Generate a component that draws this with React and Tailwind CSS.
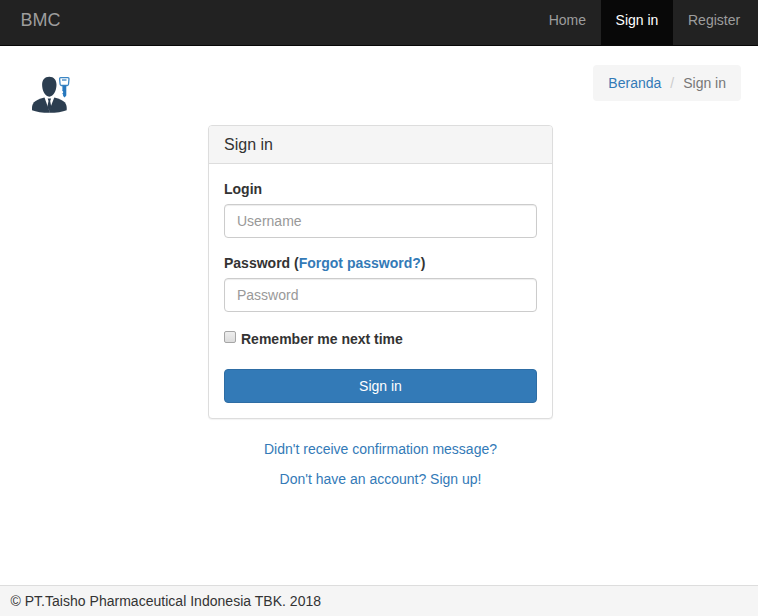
import React from "react";

function UserKeyIcon() {
  return (
    <svg className="block h-[38px] w-[40px]" viewBox="0 0 40 38" aria-hidden="true">
      <g fill="#2c3e50">
        <path d="M18.300 0.800c4.600 0 7.200 3 7.200 8 0 5.400-2.900 11.900-7.200 11.900S11.100 14.200 11.100 8.800c0-5 2.600-8 7.200-8z" />
        <path d="M13.500 21.600 L18.200 34.500 V36.800 C11.500 36.800 5 35.900 1 34.200 C0.600 27.500 2.600 24.300 13.500 21.600z" />
        <path d="M23.300 21.600 L18.200 34.500 V36.800 C25.200 36.800 31.700 35.900 35.700 34.200 C36.100 27.500 34.100 24.300 23.300 21.600z" />
        <path d="M16.700 22.600h3.400l-.9 2.300 1.100 6-2 4-2-4 1.200-6z" />
      </g>
      <path d="M29.600 1.700h7.400q1 0 1 1l-.5 5.600q-.1 1.200-1.300 1.200h-5.800q-1.200 0-1.300-1.200l-.5-5.600q0-1 1-1z" fill="#fff" stroke="#3b86c4" strokeWidth="1.300" />
      <path d="M31 4h4.500" stroke="#2878bd" strokeWidth="1.200" />
      <path d="M31.400 9.500h3.900v10l-1.700 1.900-1.500-1.500v-1.300l-.9-.9.900-.9v-1.200l-.9-.9.200-.8z" fill="#2878bd" />
    </svg>
  );
}

function Field({ id, label, type, placeholder }) {
  return (
    <div className="mb-[15px]">
      <label htmlFor={id} className="mb-[5px] block font-bold">{label}</label>
      <input
        id={id}
        type={type}
        placeholder={placeholder}
        className="block h-[34px] w-full rounded-[4px] border border-[#ccc] bg-white px-3 py-1.5 shadow-[inset_0_1px_1px_rgba(0,0,0,0.075)] outline-none placeholder:text-[#999]"
      />
    </div>
  );
}

export default function App() {
  return (
    <div className="flex h-[616px] w-full flex-col overflow-hidden bg-white font-['Liberation_Sans',Arial,sans-serif] text-[14px] leading-5 text-[#333]">
      <nav className="flex h-[46px] shrink-0 justify-between border-b border-[#080808] bg-[#222] pr-[2px] text-[#9d9d9d]">
        <a href="#" className="pt-[10px] pl-[20.5px] text-[18px]">BMC</a>
        <div className="flex">
          <a href="#" className="px-[15px] pt-[10px]">Home</a>
          <a href="#" className="w-[72px] bg-[#080808] pt-[10px] text-center text-white">Sign in</a>
          <a href="#" className="w-[83px] pt-[10px] pl-[15px]">Register</a>
        </div>
      </nav>

      <header className="flex h-[79px] shrink-0 items-start justify-between pr-[17px] pl-[31px]">
        <div className="pt-[30px]"><UserKeyIcon /></div>
        <ol className="mt-[19px] flex h-9 rounded-[4px] bg-[#f5f5f5] px-[15px] py-2">
          <li><a href="#" className="text-[#337ab7]">Beranda</a></li>
          <li className="text-[#777]"><span className="px-[9px] text-[#ccc]">/</span>Sign in</li>
        </ol>
      </header>

      <main className="ml-[208px] w-[345px] grow">
        <section className="h-[294px] rounded-[4px] border border-[#ddd] bg-white shadow-[0_1px_1px_rgba(0,0,0,0.05)]">
          <h3 className="h-[38px] rounded-t-[3px] border-b border-[#ddd] bg-[#f5f5f5] px-[15px] pt-[9px] text-[16px]">Sign in</h3>
          <form className="p-[15px]" onSubmit={(e) => e.preventDefault()}>
            <Field id="login" label="Login" type="text" placeholder="Username" />
            <Field
              id="password"
              label={<>Password (<a href="#" className="text-[#337ab7]">Forgot password?</a>)</>}
              type="password"
              placeholder="Password"
            />
            <label className="mt-[17px] mb-5 flex h-5 font-bold">
              <input
                type="checkbox"
                className="mt-[2px] mr-[5px] h-3 w-3 appearance-none rounded-[2px] border border-[#a6a6a6] bg-linear-to-b from-[#eee] to-[#dcdcdc]"
              />
              Remember me next time
            </label>
            <button type="submit" className="block h-[34px] w-full rounded-[4px] border border-[#2e6da4] bg-[#337ab7] text-white">Sign in</button>
          </form>
        </section>
        <p className="mt-5 mb-[10px] text-center"><a href="#" className="text-[#337ab7]">Didn't receive confirmation message?</a></p>
        <p className="text-center"><a href="#" className="text-[#337ab7]">Don't have an account? Sign up!</a></p>
      </main>

      <footer className="h-[31px] shrink-0 border-t border-[#ddd] bg-[#f5f5f5] px-[10.5px] pt-[5px] tracking-[0.02px]">
        © PT.Taisho Pharmaceutical Indonesia TBK. 2018
      </footer>
    </div>
  );
}
